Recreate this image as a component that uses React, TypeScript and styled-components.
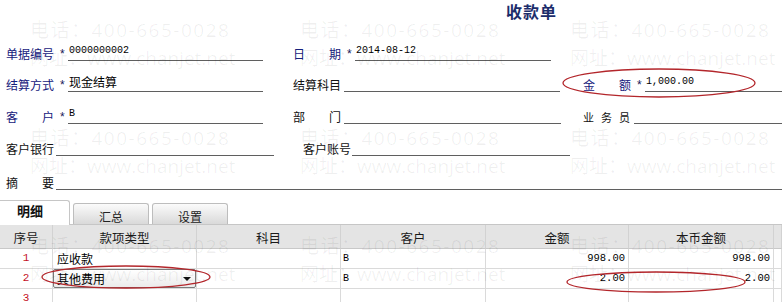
import React from "react";
import styled, { createGlobalStyle } from "styled-components";

const GlobalStyle = createGlobalStyle`
  html, body { margin: 0; padding: 0; background: #fff; }
  body {
    font-family: "Noto Sans CJK SC", "Liberation Sans", sans-serif;
    font-size: 12px;
    color: #000;
  }
`;

const Page = styled.div`
  position: relative;
  width: 782px;
  height: 302px;
  overflow: hidden;
  background: #fff;
`;

const Title = styled.h1`
  margin: 0;
  height: 29px;
  box-sizing: border-box;
  padding: 1px 0 0 506px;
  font-size: 16px;
  line-height: 20px;
  font-weight: 700;
  letter-spacing: 1px;
  color: #1c2d6b;
`;

const Form = styled.div`
  display: flex;
  flex-direction: column;
`;

const FormRow = styled.div<{ $h: number }>`
  display: flex;
  align-items: flex-end;
  height: ${(p) => p.$h}px;
  padding-left: 6px;
`;

const Group = styled.div<{ $ml?: number; $grow?: boolean }>`
  display: flex;
  align-items: flex-end;
  margin-left: ${(p) => p.$ml ?? 0}px;
  flex: ${(p) => (p.$grow ? "1 1 auto" : "none")};
`;

const LabelBox = styled.span<{ $blue?: boolean; $small?: boolean }>`
  display: flex;
  justify-content: space-between;
  width: ${(p) => (p.$small ? 47 : 48)}px;
  flex: none;
  height: 14px;
  line-height: 14px;
  font-size: ${(p) => (p.$small ? 11 : 12)}px;
  color: ${(p) => (p.$blue ? "#16207c" : "#111")};
`;

const Star = styled.span`
  width: 14px;
  flex: none;
  box-sizing: border-box;
  padding-left: 6px;
  height: 14px;
  line-height: 14px;
  font-family: "Liberation Sans", sans-serif;
  font-size: 12px;
  color: #1a1a5a;
`;

const Field = styled.div<{ $w?: number; $gap?: number }>`
  box-sizing: border-box;
  ${(p) => (p.$w ? `width: ${p.$w}px; flex: none;` : "flex: 1 1 auto;")}
  margin-left: ${(p) => p.$gap ?? 0}px;
  height: 18px;
  border-bottom: 1px solid #5f5f5f;
  display: flex;
  align-items: flex-end;
  padding-left: 1px;
`;

const MonoValue = styled.span`
  font-family: "Liberation Mono", monospace;
  font-size: 10px;
  line-height: 12px;
  margin-bottom: 3px;
  color: #000;
`;

const TextValue = styled.span`
  font-size: 12px;
  line-height: 14px;
  margin-bottom: 2px;
  color: #000;
`;

const Label = ({ text, blue, small }: { text: string; blue?: boolean; small?: boolean }) => (
  <LabelBox $blue={blue} $small={small}>
    {Array.from(text).map((c, i) => (
      <span key={i}>{c}</span>
    ))}
  </LabelBox>
);

const TabBar = styled.div`
  display: flex;
  align-items: flex-end;
  gap: 3px;
  height: 35px;
  box-sizing: border-box;
  border-bottom: 1px solid #c6c6c6;
`;

const Tab = styled.div<{ $active?: boolean }>`
  box-sizing: border-box;
  flex: none;
  color: #222;
  ${(p) =>
    p.$active
      ? `
    width: 70px;
    height: 25px;
    margin-bottom: -1px;
    background: #fff;
    border-top: 1px solid #c6c6c6;
    border-right: 1px solid #c6c6c6;
    border-radius: 0 3px 0 0;
    padding: 2px 0 0 17px;
    font-size: 13px;
    line-height: 16px;
    font-weight: 700;
    color: #111;
  `
      : `
    width: 76px;
    height: 21px;
    background: linear-gradient(#fbfbfb, #d9d9d9);
    border: 1px solid #bdbdbd;
    border-bottom: none;
    border-radius: 3px 3px 0 0;
    padding-top: 6px;
    text-align: center;
    font-size: 12px;
    line-height: 14px;
  `}
`;

const Grid = styled.div`
  display: grid;
  grid-template-columns: 53px 144px 144px 145px 143px 145px 1fr;
`;

const HeadCell = styled.div`
  box-sizing: border-box;
  height: 24px;
  background: #e4e4e4;
  border-right: 1px solid #d2d2d2;
  border-bottom: 1px solid #c8c8c8;
  padding-top: 3px;
  text-align: center;
  font-size: 12.5px;
  line-height: 19px;
  color: #1a1a1a;
`;

const Cell = styled.div<{ $kind?: "num" | "text" | "mono" | "amount" }>`
  box-sizing: border-box;
  height: 20px;
  border-right: 1px solid #dadada;
  border-bottom: 1px solid #dadada;
  overflow: hidden;
  white-space: nowrap;
  ${(p) =>
    p.$kind === "num"
      ? `text-align: center; color: #c4121e; font-family: "Liberation Mono", monospace; font-size: 11px; line-height: 19px;`
      : p.$kind === "mono"
      ? `padding-left: 2px; font-family: "Liberation Mono", monospace; font-size: 10px; line-height: 19px;`
      : p.$kind === "amount"
      ? `text-align: right; padding-right: 3px; font-family: "Liberation Mono", monospace; font-size: 10.5px; line-height: 19px;`
      : `padding-left: 4px; font-size: 12px; line-height: 19px;`}
`;

const SelectCell = styled.div`
  box-sizing: border-box;
  height: 20px;
  border-right: 1px solid #dadada;
  border-bottom: 1px solid #dadada;
`;

const Select = styled.div`
  box-sizing: border-box;
  width: 143px;
  height: 19px;
  border: 1px solid #7b7b7b;
  border-radius: 2px;
  background: linear-gradient(#ffffff, #ebebeb);
  display: flex;
  align-items: center;
  justify-content: space-between;
  padding: 0 4px 0 3px;
  font-size: 12px;
  line-height: 16px;
`;

const Caret = styled.span`
  width: 0;
  height: 0;
  border-left: 4px solid transparent;
  border-right: 4px solid transparent;
  border-top: 4px solid #111;
`;

const Watermark = styled.div`
  position: absolute;
  inset: 0;
  pointer-events: none;
  display: grid;
  grid-template-columns: repeat(3, 270px);
  grid-auto-rows: 108px;
  padding: 16px 0 0 30px;
  font-family: "Open Sans", "Noto Sans CJK SC", sans-serif;
  font-size: 19px;
  line-height: 28px;
  color: rgba(0, 0, 0, 0.062);
  white-space: nowrap;
`;

const MarkBlock = styled.div`
  display: flex;
  flex-direction: column;
`;

const MarkLine = styled.span<{ $spread?: boolean }>`
  letter-spacing: ${(p) => (p.$spread ? 1.5 : 0)}px;
`;

const Annotations = styled.svg`
  position: absolute;
  left: 0;
  top: 0;
  pointer-events: none;
`;

export default function App() {
  const marks = Array.from({ length: 9 });
  return (
    <>
      <GlobalStyle />
      <Page>
        <Title>收款单</Title>
        <Form>
          <FormRow $h={32}>
            <Group>
              <Label text="单据编号" blue />
              <Star>*</Star>
              <Field $w={195}>
                <MonoValue>0000000002</MonoValue>
              </Field>
            </Group>
            <Group $ml={30}>
              <Label text="日期" blue />
              <Star>*</Star>
              <Field $w={196}>
                <MonoValue>2014-08-12</MonoValue>
              </Field>
            </Group>
          </FormRow>
          <FormRow $h={31}>
            <Group>
              <Label text="结算方式" blue />
              <Star>*</Star>
              <Field $w={195}>
                <TextValue>现金结算</TextValue>
              </Field>
            </Group>
            <Group $ml={30}>
              <Label text="结算科目" />
              <Field $w={216} $gap={3} />
            </Group>
            <Group $ml={23} $grow>
              <Label text="金额" blue />
              <Star>*</Star>
              <Field>
                <MonoValue>1,000.00</MonoValue>
              </Field>
            </Group>
          </FormRow>
          <FormRow $h={32}>
            <Group>
              <Label text="客户" blue />
              <Star>*</Star>
              <Field $w={195}>
                <MonoValue>B</MonoValue>
              </Field>
            </Group>
            <Group $ml={30}>
              <Label text="部门" />
              <Field $w={217} $gap={3} />
            </Group>
            <Group $ml={22} $grow>
              <Label text="业务员" small />
              <Field $gap={4} />
            </Group>
          </FormRow>
          <FormRow $h={32}>
            <Group>
              <Label text="客户银行" />
              <Field $w={218} $gap={2} />
            </Group>
            <Group $ml={29}>
              <Label text="客户账号" />
              <Field $w={218} $gap={1} />
            </Group>
          </FormRow>
          <FormRow $h={34}>
            <Group $grow>
              <Label text="摘要" />
              <Field $gap={2} />
            </Group>
          </FormRow>
        </Form>

        <TabBar>
          <Tab $active>明细</Tab>
          <Tab>汇总</Tab>
          <Tab>设置</Tab>
        </TabBar>

        <Grid>
          <HeadCell>序号</HeadCell>
          <HeadCell>款项类型</HeadCell>
          <HeadCell>科目</HeadCell>
          <HeadCell>客户</HeadCell>
          <HeadCell>金额</HeadCell>
          <HeadCell>本币金额</HeadCell>
          <HeadCell />

          <Cell $kind="num">1</Cell>
          <Cell $kind="text">应收款</Cell>
          <Cell $kind="text" />
          <Cell $kind="mono">B</Cell>
          <Cell $kind="amount">998.00</Cell>
          <Cell $kind="amount">998.00</Cell>
          <Cell />

          <Cell $kind="num">2</Cell>
          <SelectCell>
            <Select>
              <span>其他费用</span>
              <Caret />
            </Select>
          </SelectCell>
          <Cell $kind="text" />
          <Cell $kind="mono">B</Cell>
          <Cell $kind="amount">2.00</Cell>
          <Cell $kind="amount">2.00</Cell>
          <Cell />

          <Cell $kind="num">3</Cell>
          <Cell />
          <Cell />
          <Cell />
          <Cell />
          <Cell />
          <Cell />
        </Grid>

        <Watermark>
          {marks.map((_, i) => (
            <MarkBlock key={i}>
              <MarkLine $spread>电话：400-665-0028</MarkLine>
              <MarkLine>网址：www.chanjet.net</MarkLine>
            </MarkBlock>
          ))}
        </Watermark>

        <Annotations width={782} height={302} viewBox="0 0 782 302">
          <g fill="none" stroke="#b3262b" strokeWidth={1.3}>
            <ellipse cx={659} cy={83} rx={96} ry={14} />
            <ellipse cx={126} cy={277} rx={84} ry={11} />
            <ellipse cx={656} cy={282} rx={89} ry={10} />
          </g>
        </Annotations>
      </Page>
    </>
  );
}
